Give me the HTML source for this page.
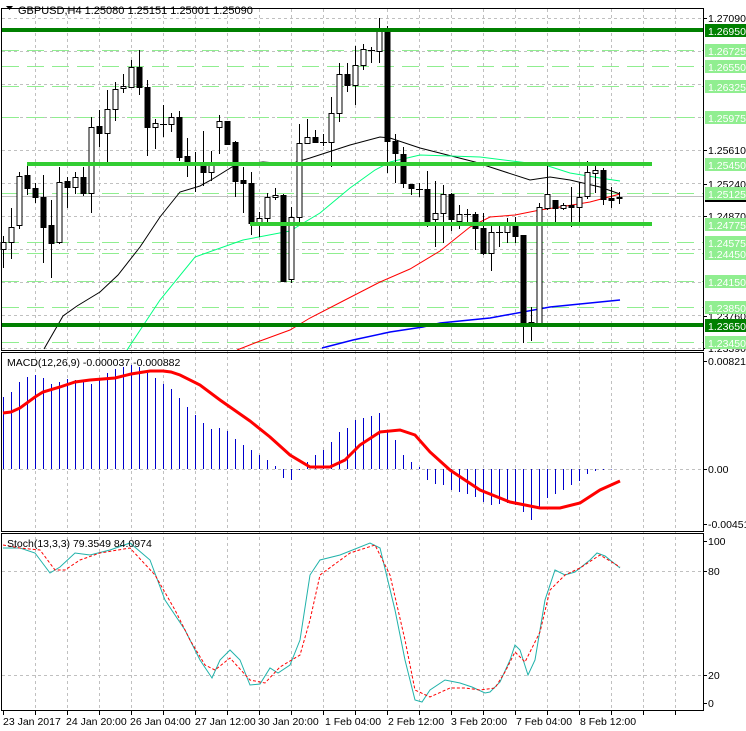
<!DOCTYPE html>
<html><head><meta charset="utf-8"><style>
html,body{margin:0;padding:0;background:#fff;}
svg{display:block;font-family:"Liberation Sans",sans-serif;font-size:10.5px;}
</style></head><body>
<svg width="746" height="731" viewBox="0 0 746 731" xmlns="http://www.w3.org/2000/svg">
<rect width="746" height="731" fill="#fff"/>
<g stroke="#c0c0c0" stroke-dasharray="3,3" stroke-width="1" shape-rendering="crispEdges">
<path d="M35.5 9V709M67.5 9V709M99.5 9V709M131.5 9V709M163.5 9V709M195.5 9V709M227.5 9V709M259.5 9V709M291.5 9V709M323.5 9V709M355.5 9V709M387.5 9V709M419.5 9V709M451.5 9V709M483.5 9V709M515.5 9V709M547.5 9V709M579.5 9V709M611.5 9V709M643.5 9V709M675.5 9V709"/>
<path d="M2 18.5H703M2 51.5H703M2 84.5H703M2 117.5H703M2 150.5H703M2 183.5H703M2 216.5H703M2 249.5H703M2 282.5H703M2 315.5H703M2 348.5H703"/>
<path d="M2 469.5H703M2 571.5H703M2 675.5H703"/>
</g>
<line x1="2" y1="196.5" x2="703" y2="196.5" stroke="#c0c0c0" shape-rendering="crispEdges"/>
<g stroke="#90ee90" stroke-width="1" stroke-dasharray="17,8" shape-rendering="crispEdges">
<path d="M2 50.5H703M2 66.5H703M2 86.5H703M2 117.5H703M2 193.5H703M2 242.5H703M2 253.5H703M2 281.5H703M2 307.5H703M2 342.5H703"/>
</g>
<g fill="none" stroke-width="1">
<polyline stroke="#000" points="44,349 63,316 77,306 100,292 118,275 140,247 160,217 180,192 200,186 211,180 232,167 245,164 263,162 290,164 310,158 350,145 380,137 390,138 420,148 475,162 490,167 530,180 550,177 570,180 600,187 620,194"/>
<polyline stroke="#00ff7f" points="127,350 160,300 195,257 243,240 290,231 320,213 350,188 375,170 390,162 420,155 480,157 520,162 545,165 570,173 600,178 620,181"/>
<polyline stroke="#ff0000" points="237,350 260,341 290,330 310,318 345,300 380,282 410,269 440,251 470,227 490,217 515,215 540,210 560,207 590,202 620,194"/>
<polyline stroke="#0000ff" stroke-width="1.5" points="322,348 353,340 390,332 423,327 440,323 490,318 550,307 620,300"/>
</g>
<g stroke="#000" stroke-width="1" shape-rendering="crispEdges">
<path d="M3.5 236V268M11.5 208V259M19.5 172V229M27.5 165V195M35.5 183V203M43.5 175V263M51.5 200V278M59.5 167V244M67.5 177V208M75.5 172V194M83.5 167V196M91.5 117V213M99.5 110V147M107.5 90V162M115.5 82V121M123.5 74V93M131.5 60V88M139.5 50V95M147.5 80V156M155.5 119V149M163.5 105V137M171.5 113V132M179.5 111V161M187.5 138V177M195.5 152V192M203.5 131V186M211.5 151V181M219.5 115V154M227.5 121V144M235.5 141V197M243.5 167V213M251.5 172V235M259.5 212V237M267.5 193V225M275.5 188V200M283.5 194V282M291.5 207V283M299.5 124V223M307.5 119V143M315.5 130V143M323.5 134V146M331.5 97V167M339.5 63V122M347.5 63V92M355.5 46V105M363.5 44V70M371.5 47V63M379.5 18V63M387.5 26V173M395.5 134V183M403.5 147V188M411.5 184V195M419.5 183V197M427.5 171V227M435.5 181V247M443.5 185V243M451.5 193V231M459.5 205V229M467.5 209V224M475.5 212V250M483.5 213V255M491.5 223V271M499.5 223V247M507.5 218V243M515.5 217V243M523.5 235V343M531.5 307V341M539.5 203V325M547.5 163V210M555.5 200V225M563.5 203V210M571.5 187V227M579.5 182V222M587.5 161V199M595.5 165V193M603.5 168V205M611.5 187V208M619.5 192V204"/>
<path d="M160 124.5H167M192 162.5H199M320 142.5H327M368 50.5H375M416 189.5H423M464 214.5H471M496 232.5H503"/>
<g fill="#fff">
<rect x="1" y="242.5" width="5" height="7"/><rect x="9" y="227.5" width="5" height="15"/><rect x="17" y="176.5" width="5" height="49"/><rect x="57" y="182.5" width="5" height="60"/><rect x="73" y="177.5" width="5" height="10"/><rect x="89" y="127.5" width="5" height="66"/><rect x="105" y="109.5" width="5" height="24"/><rect x="113" y="89.5" width="5" height="20"/><rect x="121" y="86.5" width="5" height="2"/><rect x="129" y="67.5" width="5" height="20"/><rect x="153" y="123.5" width="5" height="4"/><rect x="169" y="117.5" width="5" height="7"/><rect x="209" y="163.5" width="5" height="9"/><rect x="217" y="121.5" width="5" height="6"/><rect x="257" y="218.5" width="5" height="5"/><rect x="265" y="197.5" width="5" height="21"/><rect x="273" y="195.5" width="5" height="2"/><rect x="289" y="217.5" width="5" height="62"/><rect x="297" y="143.5" width="5" height="74"/><rect x="305" y="137.5" width="5" height="6"/><rect x="329" y="113.5" width="5" height="29"/><rect x="337" y="74.5" width="5" height="39"/><rect x="353" y="65.5" width="5" height="20"/><rect x="361" y="49.5" width="5" height="16"/><rect x="377" y="31.5" width="5" height="20"/><rect x="433" y="213.5" width="5" height="6"/><rect x="441" y="194.5" width="5" height="19"/><rect x="457" y="214.5" width="5" height="7"/><rect x="489" y="232.5" width="5" height="21"/><rect x="505" y="224.5" width="5" height="8"/><rect x="529" y="322.5" width="5" height="3"/><rect x="537" y="207.5" width="5" height="116"/><rect x="545" y="194.5" width="5" height="14"/><rect x="561" y="205.5" width="5" height="3"/><rect x="577" y="197.5" width="5" height="10"/><rect x="585" y="172.5" width="5" height="24"/><rect x="593" y="170.5" width="5" height="3"/>
</g>
<g fill="#000">
<rect x="25" y="175.5" width="5" height="13"/><rect x="33" y="188.5" width="5" height="9"/><rect x="41" y="197.5" width="5" height="30"/><rect x="49" y="225.5" width="5" height="18"/><rect x="65" y="181.5" width="5" height="6"/><rect x="81" y="177.5" width="5" height="16"/><rect x="97" y="126.5" width="5" height="7"/><rect x="137" y="67.5" width="5" height="20"/><rect x="145" y="87.5" width="5" height="40"/><rect x="177" y="117.5" width="5" height="40"/><rect x="185" y="156.5" width="5" height="6"/><rect x="201" y="162.5" width="5" height="10"/><rect x="225" y="121.5" width="5" height="23"/><rect x="233" y="142.5" width="5" height="39"/><rect x="241" y="180.5" width="5" height="3"/><rect x="249" y="183.5" width="5" height="40"/><rect x="281" y="195.5" width="5" height="86"/><rect x="313" y="137.5" width="5" height="5"/><rect x="345" y="74.5" width="5" height="11"/><rect x="385" y="32.5" width="5" height="109"/><rect x="393" y="141.5" width="5" height="12"/><rect x="401" y="154.5" width="5" height="29"/><rect x="409" y="184.5" width="5" height="4"/><rect x="425" y="189.5" width="5" height="32"/><rect x="449" y="194.5" width="5" height="25"/><rect x="473" y="214.5" width="5" height="14"/><rect x="481" y="228.5" width="5" height="25"/><rect x="513" y="224.5" width="5" height="12"/><rect x="521" y="235.5" width="5" height="90"/><rect x="553" y="200.5" width="5" height="8"/><rect x="569" y="205.5" width="5" height="2"/><rect x="601" y="170.5" width="5" height="29"/><rect x="609" y="198.5" width="5" height="2"/><rect x="617" y="197.5" width="5" height="1"/>
</g>
</g>
<g shape-rendering="crispEdges">
<rect x="2" y="28" width="701" height="4" fill="#008000"/>
<rect x="2" y="323" width="701" height="4" fill="#008000"/>
<rect x="27" y="162" width="625" height="4" fill="#32cd32"/>
<rect x="250" y="222" width="402" height="4" fill="#32cd32"/>
</g>
<g stroke="#0000cd" stroke-width="1" shape-rendering="crispEdges">
<path d="M3.5 469V397M11.5 469V392M19.5 469V382M27.5 469V377M35.5 469V375M43.5 469V378M51.5 469V384M59.5 469V382M67.5 469V379M75.5 469V380M83.5 469V380M91.5 469V384M99.5 469V380M107.5 469V373M115.5 469V369M123.5 469V367M131.5 469V365M139.5 469V367M147.5 469V373M155.5 469V378M163.5 469V384M171.5 469V389M179.5 469V398M187.5 469V407M195.5 469V415M203.5 469V423M211.5 469V429M219.5 469V428M227.5 469V431M235.5 469V439M243.5 469V445M251.5 469V450M259.5 469V455M267.5 469V460M275.5 469V466M283.5 469V478M291.5 469V480M299.5 469V470M307.5 469V462M315.5 469V455M323.5 469V450M331.5 469V442M339.5 469V432M347.5 469V428M355.5 469V420M363.5 469V418M371.5 469V416M379.5 469V413M387.5 469V430M395.5 469V440M403.5 469V455M411.5 469V462M419.5 469V467M427.5 469V480M435.5 469V484M443.5 469V485M451.5 469V490M459.5 469V492M467.5 469V494M475.5 469V497M483.5 469V502M491.5 469V505M499.5 469V504M507.5 469V503M515.5 469V505M523.5 469V512M531.5 469V520M539.5 469V508M547.5 469V498M555.5 469V494M563.5 469V490M571.5 469V485M579.5 469V481M587.5 469V474M595.5 469V471M603.5 469V470M611.5 469V469.5"/>
</g>
<polyline fill="none" stroke="#ff0000" stroke-width="3" points="3,413 11,412 20,408 35,397 43,392 60,387 75,382 90,380 115,378 131,374 150,371 163,371 171,372 180,375 200,385 220,400 240,414 250,421 270,437 290,455 310,467 330,467 345,460 360,445 380,432 400,430 415,435 430,452 450,470 480,490 510,502 540,508 560,508 580,503 600,490 620,481"/>
<polyline fill="none" stroke="#20b2aa" stroke-width="1" points="3,548 20,548 35,553 50,573 60,567 75,553 90,555 110,550 130,543 150,560 165,600 185,630 200,660 212,678 220,660 230,650 240,660 250,685 260,684 270,668 278,673 290,665 300,640 310,575 320,560 340,555 370,543 380,548 395,610 405,660 415,700 422,702 430,690 445,680 460,683 472,687 485,693 490,692 500,682 510,660 515,645 520,650 528,675 535,660 545,600 555,570 565,575 575,572 590,560 597,553 605,556 620,568"/>
<polyline fill="none" stroke="#ff0000" stroke-width="1" stroke-dasharray="3,2" points="3,545 20,548 40,550 55,570 65,570 80,560 100,553 130,548 155,575 175,610 190,640 205,665 215,670 230,658 250,680 265,683 280,667 300,655 310,620 320,575 350,553 375,545 390,575 405,640 415,690 430,697 450,688 465,688 480,690 495,688 505,672 515,652 525,662 540,632 550,590 565,575 580,568 600,555 620,567"/>
<g fill="none" stroke="#000" stroke-width="1" shape-rendering="crispEdges">
<rect x="1.5" y="8.5" width="702" height="342"/>
<rect x="1.5" y="352.5" width="702" height="179"/>
<rect x="1.5" y="533.5" width="702" height="177"/>
<path d="M35.5 711V715M67.5 711V715M99.5 711V715M131.5 711V715M163.5 711V715M195.5 711V715M227.5 711V715M259.5 711V715M291.5 711V715M323.5 711V715M355.5 711V715M387.5 711V715M419.5 711V715M451.5 711V715M483.5 711V715M515.5 711V715M547.5 711V715M579.5 711V715M611.5 711V715M643.5 711V715M675.5 711V715M3.5 711V715"/>
<path d="M703 18.5H707M703 150.5H707M703 184.5H707M703 216.5H707M703 316.5H707M703 348.5H707M703 361.5H707M703 469.5H707M703 524.5H707M703 541.5H707M703 571.5H707M703 675.5H707M703 703.5H707"/>
</g>
<path d="M6 6H13L9.5 10Z" fill="#000"/>
<text x="18" y="14" fill="#000" font-size="11">GBPUSD,H4  1.25080 1.25151 1.25001 1.25090</text>
<text x="7" y="366" fill="#000">MACD(12,26,9) -0.000037 -0.000882</text>
<text x="7" y="547" fill="#000">Stoch(13,3,3) 79.3549 84.0974</text>
<g fill="#000">
<text x="708" y="22">1.27090</text>
<text x="708" y="154">1.25610</text>
<text x="708" y="188">1.25240</text>
<text x="708" y="220">1.24870</text>
<text x="708" y="320">1.23760</text>
<text x="708" y="352">1.23390</text>
<text x="708" y="365">0.008218</text>
<text x="708" y="473">0.00</text>
<text x="708" y="528">-0.004511</text>
<text x="708" y="545">100</text>
<text x="708" y="575">80</text>
<text x="708" y="679">20</text>
<text x="708" y="707">0</text>
</g>
<rect x="705" y="190" width="41" height="12" fill="#000"/>
<g shape-rendering="crispEdges">
<rect x="705" y="24" width="41" height="13" fill="#008000"/>
<rect x="705" y="319" width="41" height="13" fill="#008000"/>
<g fill="#90ee90">
<rect x="705" y="44" width="41" height="13"/><rect x="705" y="60" width="41" height="13"/><rect x="705" y="80" width="41" height="13"/><rect x="705" y="111" width="41" height="13"/><rect x="705" y="158" width="41" height="13"/><rect x="705" y="187" width="41" height="13"/><rect x="705" y="218" width="41" height="13"/><rect x="705" y="236" width="41" height="13"/><rect x="705" y="247" width="41" height="13"/><rect x="705" y="275" width="41" height="13"/><rect x="705" y="301" width="41" height="13"/><rect x="705" y="336" width="41" height="13"/>
</g>
</g>
<g fill="#fff">
<text x="708" y="35">1.26950</text><text x="708" y="330">1.23650</text>
<text x="708" y="55">1.26725</text><text x="708" y="71">1.26550</text><text x="708" y="91">1.26325</text><text x="708" y="122">1.25975</text><text x="708" y="169">1.25450</text><text x="708" y="198">1.25125</text><text x="708" y="229">1.24775</text><text x="708" y="247">1.24575</text><text x="708" y="258">1.24450</text><text x="708" y="286">1.24150</text><text x="708" y="312">1.23850</text><text x="708" y="347">1.23450</text>
</g>
<g fill="#000">
<text x="3" y="725">23 Jan 2017</text>
<text x="66" y="725">24 Jan 20:00</text>
<text x="130" y="725">26 Jan 04:00</text>
<text x="195" y="725">27 Jan 12:00</text>
<text x="258" y="725">30 Jan 20:00</text>
<text x="325" y="725">1 Feb 04:00</text>
<text x="388" y="725">2 Feb 12:00</text>
<text x="451" y="725">3 Feb 20:00</text>
<text x="516" y="725">7 Feb 04:00</text>
<text x="580" y="725">8 Feb 12:00</text>
</g>
</svg>
</body></html>
